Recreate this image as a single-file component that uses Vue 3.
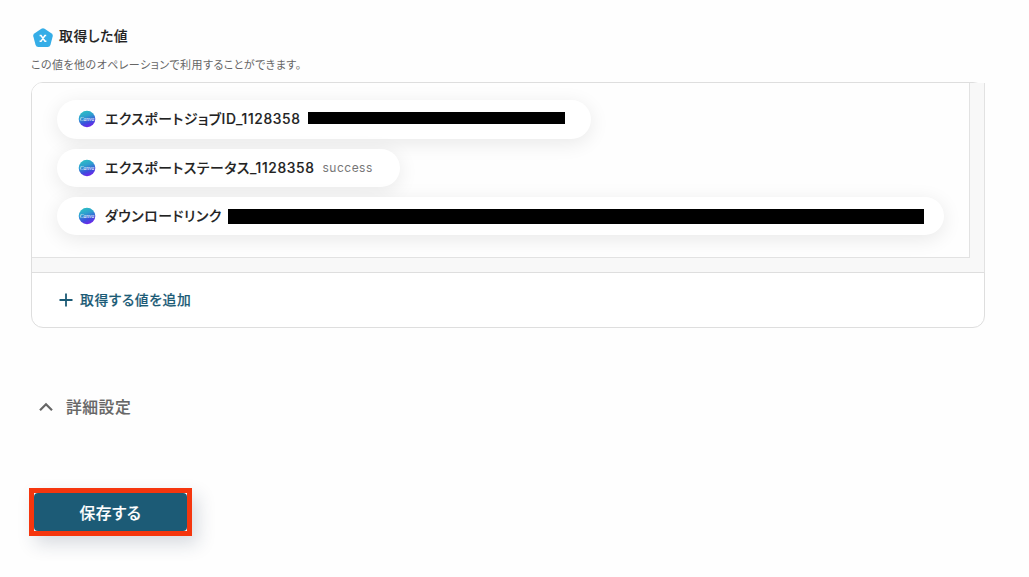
<script setup>
const values = [
  { name: "エクスポートジョブID_1128358", kind: "job", masked: true },
  { name: "エクスポートステータス_1128358", kind: "status", text: "success" },
  { name: "ダウンロードリンク", kind: "link", masked: true },
];
</script>

<template>
  <main class="page">
    <header class="heading">
      <svg class="heading-icon" viewBox="0 0 20 20">
        <path
          d="M8.4 .7Q10 -.3 11.6 .7L18.7 5.5Q20.1 6.6 19.7 8.2L17.5 16.8Q16.8 19 14.7 19H5.3Q3.2 19 2.5 16.8L.3 8.2Q-.1 6.6 1.3 5.5Z"
          fill="#35ade7"
        />
        <path
          d="M6.6 7.5H8L12 13.3H13.4M13.2 7.5H11.9L8 13.3H6.6"
          fill="none"
          stroke="#fff"
          stroke-width="1.5"
        />
      </svg>
      <h2 class="heading-title">取得した値</h2>
    </header>
    <p class="description">
      この値を他のオペレーションで利用することができます。
    </p>

    <section class="panel">
      <div class="panel-scroll">
        <ul class="value-list">
          <li
            v-for="value in values"
            :key="value.name"
            class="value"
            :class="`value-${value.kind}`"
          >
            <svg class="value-icon" viewBox="0 0 18 18">
              <defs>
                <linearGradient
                  :id="`logo-${value.kind}`"
                  x1=".3"
                  y1="0"
                  x2=".65"
                  y2="1"
                >
                  <stop offset="0" stop-color="#2dbfc4" />
                  <stop offset=".35" stop-color="#2e9fce" />
                  <stop offset=".7" stop-color="#3b4fdc" />
                  <stop offset="1" stop-color="#7620ed" />
                </linearGradient>
              </defs>
              <circle cx="9" cy="9" r="8.3" :fill="`url(#logo-${value.kind})`" />
              <text x="9" y="10.8" text-anchor="middle" class="logo-text">
                Canva
              </text>
            </svg>
            <span class="value-name">{{ value.name }}</span>
            <span v-if="value.masked" class="value-mask"></span>
            <span v-else class="value-text">{{ value.text }}</span>
          </li>
        </ul>
      </div>
      <button class="add-button">
        <svg class="add-icon" viewBox="0 0 14 14">
          <path d="M7 .5V13.5M.5 7H13.5" />
        </svg>
        <span class="add-label">取得する値を追加</span>
      </button>
    </section>

    <div class="advanced">
      <svg class="advanced-icon" viewBox="0 0 14 10">
        <path d="M1 8.2L7 2.2L13 8.2" />
      </svg>
      <span class="advanced-label">詳細設定</span>
    </div>

    <div class="save-frame">
      <button class="save-button">保存する</button>
    </div>
  </main>
</template>

<style>
body {
  background: #fefefe;
}
</style>

<style scoped>
.page {
  box-sizing: border-box;
  height: 577px;
  padding: 27px 0 0 31px;
  overflow: hidden;
  font-family: Inter, "Noto Sans CJK JP", sans-serif;
  font-feature-settings: "palt";
  letter-spacing: 0.5px;
  color: #222;
}

button {
  border: none;
  font-family: inherit;
  font-feature-settings: inherit;
  letter-spacing: inherit;
}

.heading {
  display: flex;
  align-items: center;
  height: 20px;
}

.heading-icon {
  width: 20px;
  height: 20px;
  margin: 1px 0 0 2px;
}

.heading-title {
  margin: -2px 0 0 6px;
  font-size: 13.8px;
  line-height: 20px;
  font-weight: 500;
  letter-spacing: 0.6px;
  -webkit-text-stroke: 0.15px currentColor;
}

.description {
  margin: 10px 0 0;
  font-size: 11px;
  line-height: 16px;
  letter-spacing: 0.45px;
  color: #666;
}

.panel {
  box-sizing: border-box;
  width: 954px;
  height: 246px;
  margin-top: 9px;
  border: 1px solid #dedede;
  border-radius: 12px;
  background: #fff;
}

.panel-scroll {
  box-sizing: border-box;
  height: 190px;
  padding: 0 14px 14px 0;
  border-bottom: 1px solid #dedede;
  border-right: 1px solid #e2e2e2;
  border-radius: 11px 0 0 0;
  background: #f8f8f8;
  margin-right: -1px;
}

.value-list {
  box-sizing: border-box;
  height: 175px;
  margin: 0;
  padding: 17px 0 0 25px;
  border-right: 1px solid #e2e2e2;
  border-bottom: 1px solid #e2e2e2;
  border-radius: 11px 0 0 0;
  background: #fefefe;
  list-style: none;
  overflow: hidden;
}

.value {
  box-sizing: border-box;
  display: flex;
  align-items: center;
  height: 38px;
  margin-bottom: 10px;
  padding-left: 21px;
  border-radius: 20px;
  background: #fff;
  box-shadow: 0 4px 20px rgb(0 0 0 / 0.09);
}

.value-job {
  width: 534px;
  height: 39px;
}

.value-status {
  width: 343px;
}

.value-link {
  width: 887px;
}

.value-icon {
  width: 18px;
  height: 18px;
  flex: none;
}

.value-job .value-icon {
  margin-top: -1px;
}

.logo-text {
  fill: #fff;
  font-family: "Liberation Serif", serif;
  font-size: 5.5px;
  font-style: italic;
  letter-spacing: 0;
}

.value-name {
  margin: -2px 0 0 9px;
  font-size: 13.8px;
  font-weight: 500;
  letter-spacing: 0.63px;
  -webkit-text-stroke: 0.15px currentColor;
  white-space: nowrap;
}

.value-job .value-name {
  margin-top: -3px;
}

.value-text {
  margin: -1px 0 0 8px;
  font-size: 12px;
  color: #777;
}

.value-mask {
  width: 257px;
  height: 12px;
  margin: -3px 0 0 7px;
  background: #000;
}

.value-link .value-mask {
  width: 696px;
  height: 15px;
  margin: 0 0 0 6px;
}

.add-button {
  display: flex;
  align-items: center;
  height: 54px;
  padding: 0 0 0 28px;
  background: none;
  font-size: 13.8px;
  font-weight: 500;
  letter-spacing: 0.6px;
  -webkit-text-stroke: 0.15px currentColor;
  color: #1c5b76;
}

.add-label {
  margin-top: -2px;
}

.add-icon {
  width: 14px;
  height: 14px;
  margin: -1px 6px 0 -1px;
}

.add-label {
  padding-left: 1px;
}

.add-icon path {
  stroke: currentColor;
  stroke-width: 1.8;
}

.advanced {
  display: flex;
  align-items: center;
  height: 24px;
  margin: 67px 0 0 8px;
  font-size: 15.8px;
  font-weight: 500;
  -webkit-text-stroke: 0.15px currentColor;
  color: #666;
}

.advanced-label {
  margin-top: -2px;
}

.advanced-icon {
  width: 14px;
  height: 10px;
  margin-right: 13px;
}

.advanced-icon path {
  fill: none;
  stroke: currentColor;
  stroke-width: 2.2;
}

.save-frame {
  box-sizing: border-box;
  width: 163px;
  height: 48px;
  margin: 69px 0 0 -2px;
  border: 5px solid #f5360e;
  background: #fff;
  box-shadow: 6px 8px 18px rgb(30 50 75 / 0.17);
}

.save-button {
  width: 100%;
  height: 100%;
  padding: 1px 0 0;
  border-radius: 4px;
  background: #1c5b76;
  font-size: 15.8px;
  font-weight: 500;
  -webkit-text-stroke: 0.15px currentColor;
  color: #fff;
}
</style>
